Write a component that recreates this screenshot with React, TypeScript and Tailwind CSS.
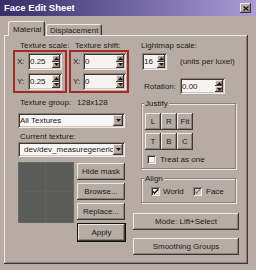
import React from "react";

const RAISED =
  "shadow-[inset_-1px_-1px_0_#3e3834,inset_1px_1px_0_#efe9e3,inset_-2px_-2px_0_#8a8079]";
const SUNKEN =
  "shadow-[inset_1px_1px_0_#8a8079,inset_-1px_-1px_0_#efe9e3,inset_2px_2px_0_#3e3834,inset_-2px_-2px_0_#cfc7bf]";
const ETCHED =
  "border border-[#8a8079] shadow-[inset_1px_1px_0_#efe9e3,1px_1px_0_#efe9e3]";

function Tri({ up }: { up?: boolean }) {
  return (
    <svg width="5" height="3" viewBox="0 0 5 3">
      <path d={up ? "M0 3L2.5 0L5 3Z" : "M0 0L5 0L2.5 3Z"} fill="#1c1a18" />
    </svg>
  );
}

function Spinner() {
  return (
    <div className="w-[8px] h-full flex flex-col">
      <div className={`flex-1 bg-[#b7aca4] ${RAISED} flex items-center justify-center`}>
        <Tri up />
      </div>
      <div className={`flex-1 bg-[#b7aca4] ${RAISED} flex items-center justify-center`}>
        <Tri />
      </div>
    </div>
  );
}

function SpinField({ value, className }: { value: string; className: string }) {
  return (
    <div className={`${className} ${SUNKEN} p-[2px] flex bg-[#f5f2ef]`}>
      <div className="flex-1 flex items-center overflow-hidden whitespace-nowrap">{value}</div>
      <Spinner />
    </div>
  );
}

function Combo({ value, pad }: { value: string; pad: string }) {
  return (
    <div className={`ml-[5px] w-[107px] h-[15px] ${SUNKEN} p-[2px] flex bg-[#f8f6f4]`}>
      <div className={`flex-1 flex items-center overflow-hidden whitespace-nowrap ${pad}`}>{value}</div>
      <div className={`w-[10px] h-full bg-[#b7aca4] ${RAISED} flex items-center justify-center`}>
        <Tri />
      </div>
    </div>
  );
}

function Btn({ children, className }: { children: React.ReactNode; className: string }) {
  return (
    <div className={`${className} bg-[#b7aca4] ${RAISED} flex items-center justify-center whitespace-nowrap`}>
      {children}
    </div>
  );
}

function Check({ checked, gray }: { checked?: boolean; gray?: boolean }) {
  return (
    <div
      className={`w-[9px] h-[9px] ${SUNKEN} ${gray ? "bg-[#d8d2cc]" : "bg-[#f8f6f4]"} flex items-center justify-center`}
    >
      {checked && (
        <svg width="7" height="7" viewBox="0 0 7 7">
          <path
            d="M0.8 3.2L2.6 5.2L6.2 1.2"
            fill="none"
            stroke={gray ? "#8a8079" : "#141210"}
            strokeWidth="1.4"
          />
        </svg>
      )}
    </div>
  );
}

function Row({ label, lw, value, fw }: { label: string; lw: string; value: string; fw: string }) {
  return (
    <div className="flex items-center h-[17px] pl-[2px]">
      <span className={lw}>{label}</span>
      <SpinField value={value} className={`${fw} h-[17px]`} />
    </div>
  );
}

export default function App() {
  return (
    <div className="w-[256px] h-[270px] overflow-hidden bg-[#b7aca4] text-[#1c1a18] font-['Liberation_Sans',Arial,sans-serif] text-[8px] leading-[9px] flex flex-col">
      {/* title bar */}
      <div className="h-[16px] shrink-0 flex items-center justify-between bg-linear-to-r from-[#382d69] to-[#ab9ed7] pl-[4px] pr-[5px]">
        <span className="text-white font-bold text-[9.5px] leading-[16px]">Face Edit Sheet</span>
        <div className={`w-[11px] h-[10px] bg-[#b7aca4] ${RAISED} flex items-center justify-center`}>
          <svg width="6" height="5" viewBox="0 0 6 5">
            <path d="M0.5 0.5L5.5 4.5M5.5 0.5L0.5 4.5" stroke="#141210" strokeWidth="1.3" />
          </svg>
        </div>
      </div>

      {/* tabs */}
      <div className="pl-[8px] pt-[5px] flex items-end shrink-0">
        <div className="relative z-10 h-[15px] w-[37px] bg-[#b7aca4] rounded-t-[2px] pt-[4px] pl-[5px] whitespace-nowrap shadow-[inset_1px_1px_0_#efe9e3,inset_-1px_0_0_#3e3834,inset_-2px_0_0_#8a8079]">
          Material
        </div>
        <div className="ml-px h-[12px] w-[56px] bg-[#b7aca4] rounded-t-[2px] pt-[2px] pl-[4px] whitespace-nowrap overflow-hidden shadow-[inset_1px_1px_0_#efe9e3,inset_-1px_0_0_#3e3834,inset_-2px_0_0_#8a8079]">
          Displacement
        </div>
      </div>

      {/* tab panel */}
      <div className={`ml-[4px] -mt-px w-[244px] h-[229px] shrink-0 ${RAISED} flex pl-[9px]`}>
        {/* left column */}
        <div className="w-[117px] pt-[6px] flex flex-col">
          <div className="flex h-[9px] whitespace-nowrap">
            <span className="ml-[7px] w-[55px]">Texture scale:</span>
            <span>Texture shift:</span>
          </div>
          <div className="flex gap-[2px]">
            <div className="w-[54px] h-[43px] border-2 border-[#a22b26] py-[1px] flex flex-col gap-[3px]">
              <Row label="X:" lw="w-[11px]" value="0.25" fw="w-[34px]" />
              <Row label="Y:" lw="w-[11px]" value="0.25" fw="w-[34px]" />
            </div>
            <div className="w-[60px] h-[43px] border-2 border-[#a22b26] py-[1px] flex flex-col gap-[3px]">
              <Row label="X:" lw="w-[10px]" value="0" fw="w-[43px]" />
              <Row label="Y:" lw="w-[10px]" value="0" fw="w-[43px]" />
            </div>
          </div>
          <div className="mt-[5px] flex h-[9px] whitespace-nowrap">
            <span className="ml-[7px] w-[57px]">Texture group:</span>
            <span>128x128</span>
          </div>
          <div className="mt-[6px]">
            <Combo value="All Textures" pad="pl-0" />
          </div>
          <div className="mt-[4px] ml-[7px] h-[9px] whitespace-nowrap">Current texture:</div>
          <div className="mt-[1px]">
            <Combo value="dev/dev_measuregeneric" pad="pl-[4px]" />
          </div>
          <div className="mt-[5px] flex">
            <div className="ml-[5px] w-[56px] h-[61px] bg-[#5b5c5a] border border-[#676865] flex">
              <div className="w-[27px] h-full border-r border-[#626361] flex flex-col">
                <div className="h-[29px] border-b border-[#60615f]" />
              </div>
              <div className="flex-1 flex flex-col">
                <div className="h-[29px] border-b border-[#60615f]" />
              </div>
            </div>
            <div className="ml-[3px] mt-[1px] w-[49px] flex flex-col gap-[3px]">
              <Btn className="w-[48px] h-[17px]">Hide mask</Btn>
              <Btn className="w-[48px] h-[17px]">Browse...</Btn>
              <Btn className="w-[48px] h-[17px]">Replace...</Btn>
              <div className="w-[49px] h-[19px] border border-[#141210]">
                <Btn className="w-full h-full">Apply</Btn>
              </div>
            </div>
          </div>
        </div>

        {/* right column */}
        <div className="ml-[3px] w-[107px] pt-[6px] flex flex-col">
          <div className="ml-[8px] h-[9px] whitespace-nowrap">Lightmap scale:</div>
          <div className="mt-[3px] flex items-center h-[17px]">
            <SpinField value="16" className="ml-[9px] w-[25px] h-[17px]" />
            <span className="ml-[13px] whitespace-nowrap">(units per luxel)</span>
          </div>
          <div className="mt-[8px] flex items-center h-[16px]">
            <span className="ml-[11px] w-[36px]">Rotation:</span>
            <SpinField value="0.00" className="w-[45px] h-[16px]" />
          </div>

          <div className={`mt-[9px] ml-[8px] w-[95px] ${ETCHED} pl-[3px] pb-[4px]`}>
            <div className="-mt-[5px] -ml-px w-fit px-[1px] h-[9px] bg-[#b7aca4]">Justify</div>
            <div className="mt-[5px] flex flex-col gap-[3px]">
              <div className="flex">
                <Btn className="w-[16px] h-[17px]">L</Btn>
                <Btn className="w-[16px] h-[17px]">R</Btn>
                <Btn className="w-[16px] h-[17px]">Fit</Btn>
              </div>
              <div className="flex">
                <Btn className="w-[16px] h-[17px]">T</Btn>
                <Btn className="w-[16px] h-[17px]">B</Btn>
                <Btn className="w-[16px] h-[17px]">C</Btn>
              </div>
            </div>
            <div className="mt-[4px] h-[10px] flex items-center pl-[2px]">
              <Check />
              <span className="ml-[4px] whitespace-nowrap">Treat as one</span>
            </div>
          </div>

          <div className={`mt-[9px] ml-[8px] w-[95px] ${ETCHED} pb-[6px]`}>
            <div className="-mt-[5px] ml-[2px] w-fit px-[1px] h-[9px] bg-[#b7aca4]">Align</div>
            <div className="mt-[3px] h-[10px] flex items-center pl-[9px]">
              <Check checked />
              <span className="ml-[3px] w-[30px]">World</span>
              <Check checked gray />
              <span className="ml-[4px]">Face</span>
            </div>
          </div>

          <Btn className="mt-[10px] w-[106px] h-[17px]">Mode: Lift+Select</Btn>
          <Btn className="mt-[8px] w-[106px] h-[17px]">Smoothing Groups</Btn>
        </div>
      </div>
    </div>
  );
}
